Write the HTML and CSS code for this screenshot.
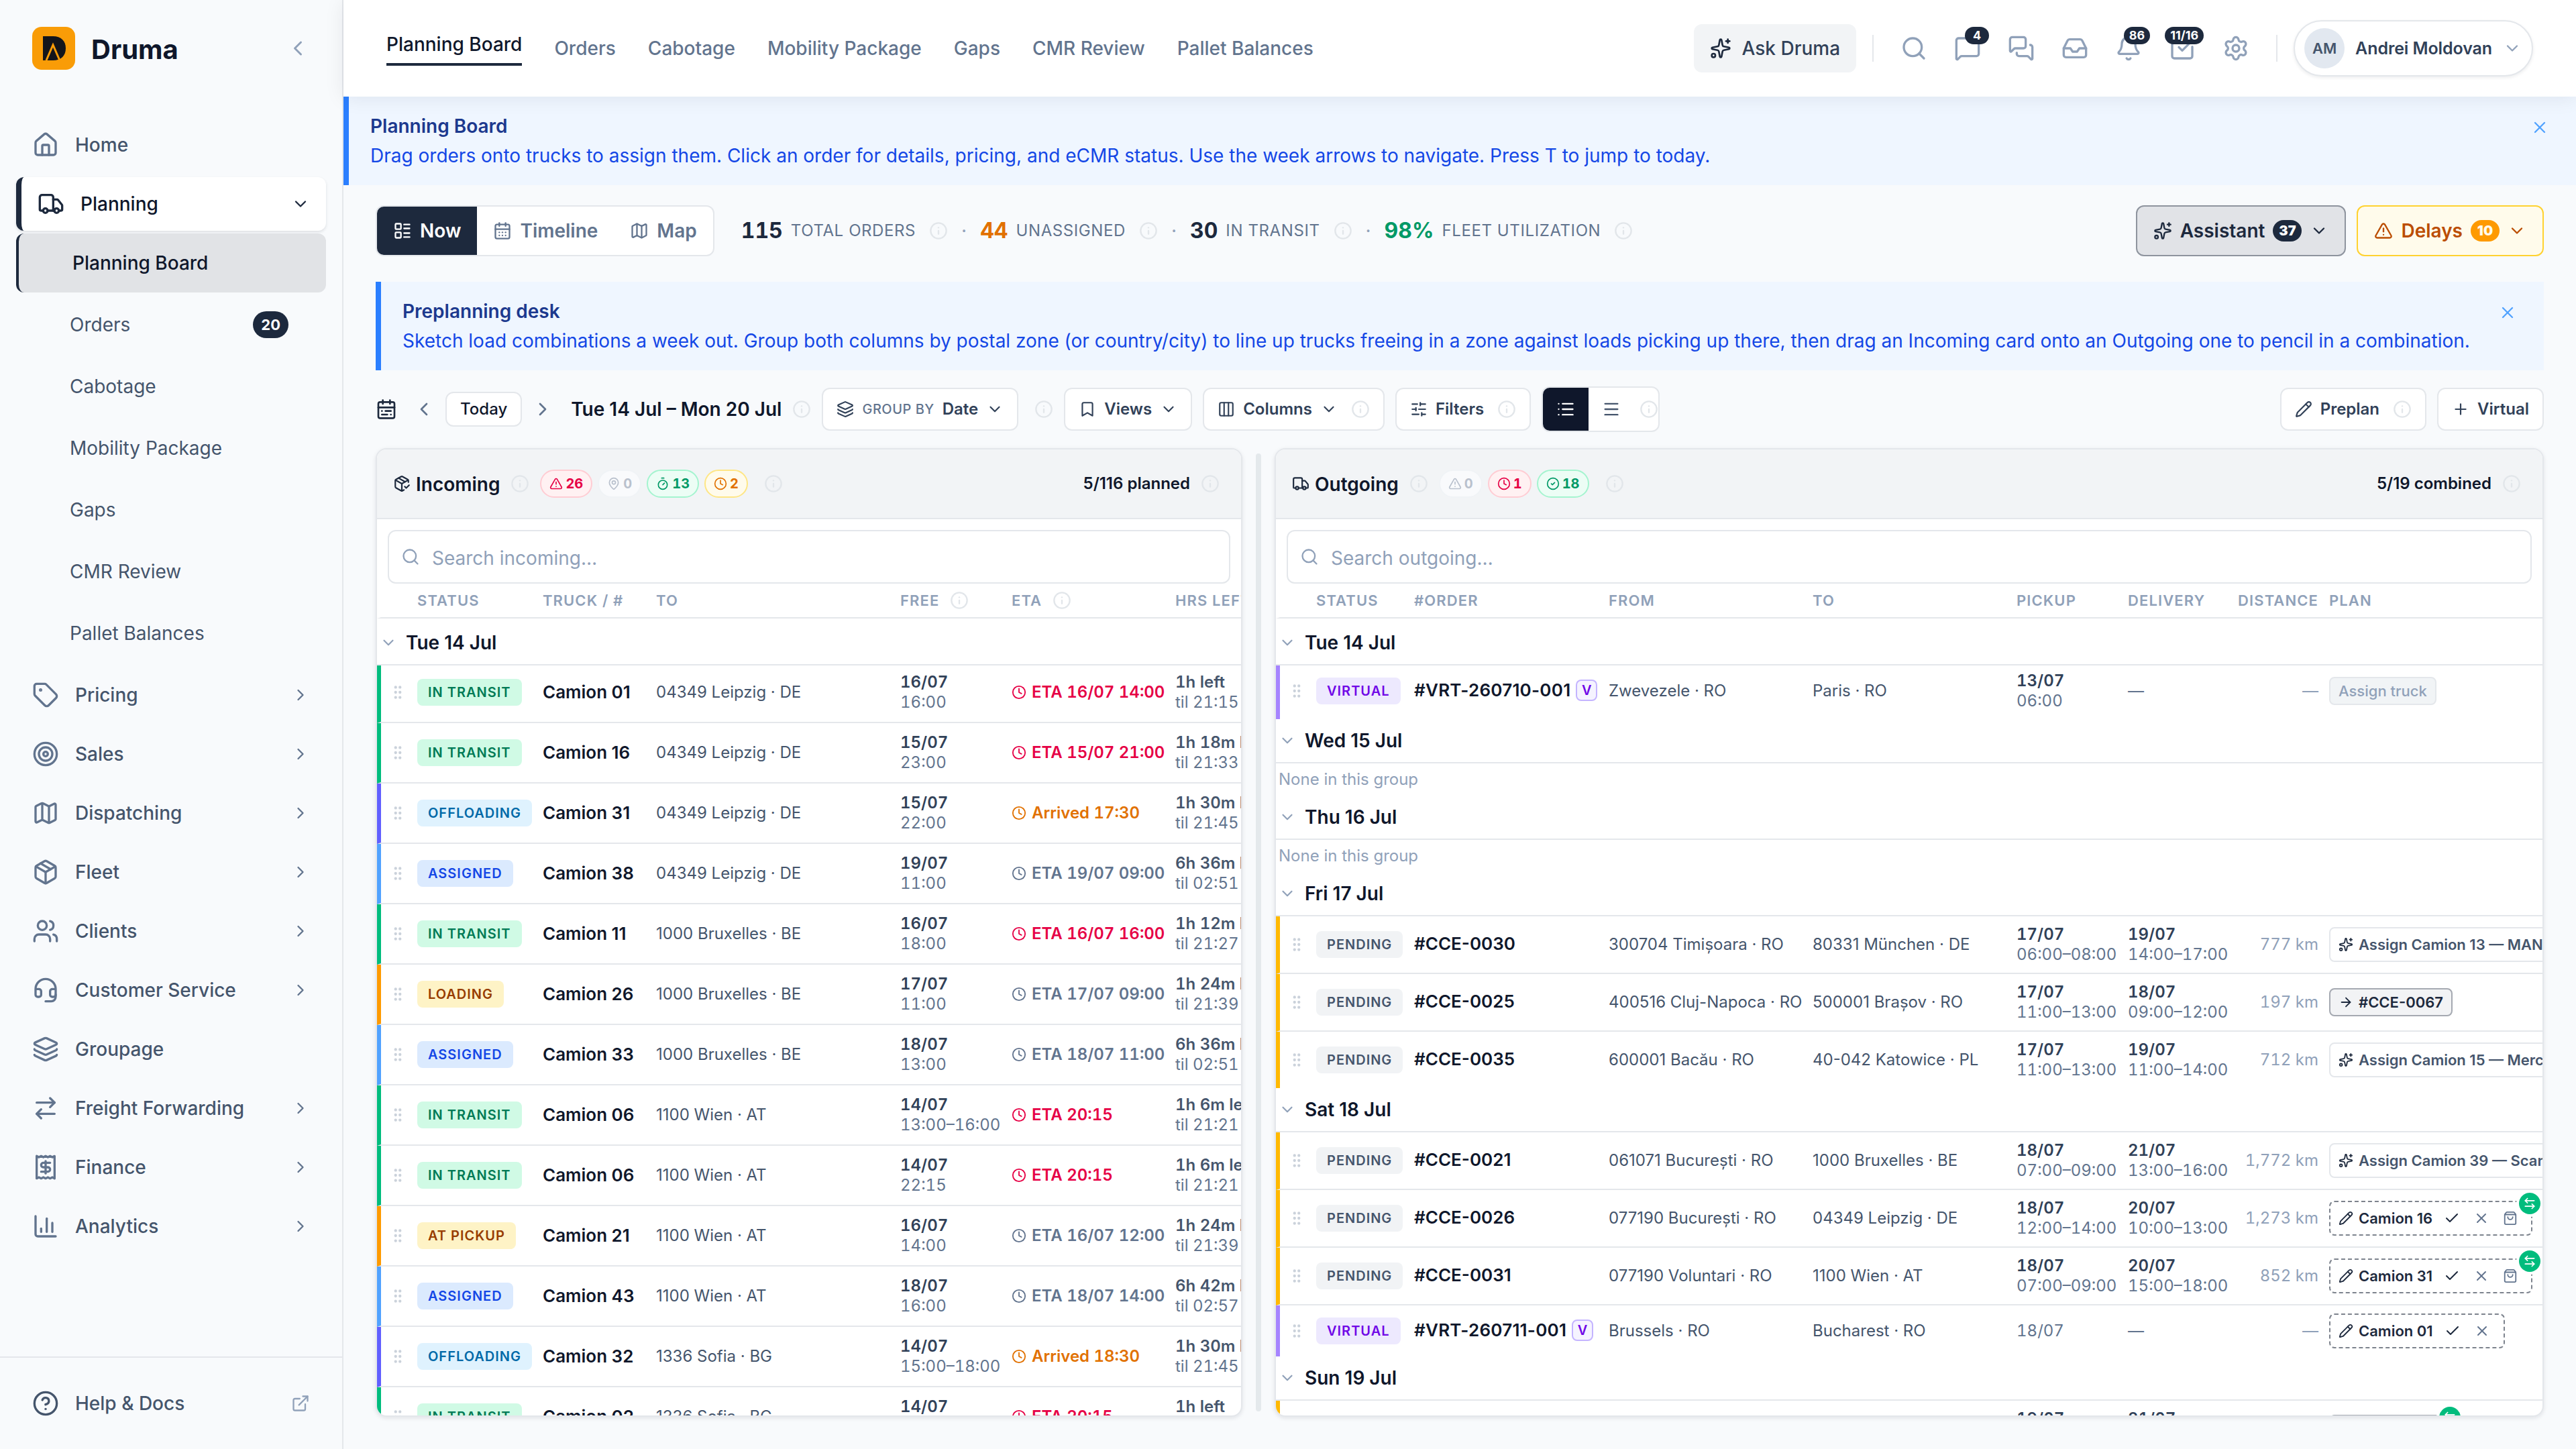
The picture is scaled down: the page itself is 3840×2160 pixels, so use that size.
FILE: index.html
```html
<!DOCTYPE html>
<html lang="en">
<head>
<meta charset="utf-8">
<title>Druma – Planning Board</title>
<link rel="stylesheet" href="styles.css">
</head>
<body>
<svg class="sprite" aria-hidden="true">
<symbol id="home" viewBox="0 0 24 24"><path d="M15 21v-8a1 1 0 0 0-1-1h-4a1 1 0 0 0-1 1v8"/><path d="M3 10a2 2 0 0 1 .709-1.528l7-6a2 2 0 0 1 2.582 0l7 6A2 2 0 0 1 21 10v9a2 2 0 0 1-2 2H5a2 2 0 0 1-2-2z"/></symbol>
<symbol id="truck" viewBox="0 0 24 24"><path d="M14 18V6a2 2 0 0 0-2-2H4a2 2 0 0 0-2 2v11a1 1 0 0 0 1 1h2"/><path d="M15 18H9"/><path d="M19 18h2a1 1 0 0 0 1-1v-3.65a1 1 0 0 0-.22-.624l-3.48-4.35A1 1 0 0 0 17.52 8H14"/><circle cx="17" cy="18" r="2"/><circle cx="7" cy="18" r="2"/></symbol>
<symbol id="tag" viewBox="0 0 24 24"><path d="M12.586 2.586A2 2 0 0 0 11.172 2H4a2 2 0 0 0-2 2v7.172a2 2 0 0 0 .586 1.414l8.704 8.704a2.426 2.426 0 0 0 3.42 0l6.58-6.58a2.426 2.426 0 0 0 0-3.42z"/><circle cx="7.5" cy="7.5" r=".5" fill="currentColor"/></symbol>
<symbol id="target" viewBox="0 0 24 24"><circle cx="12" cy="12" r="10"/><circle cx="12" cy="12" r="6"/><circle cx="12" cy="12" r="2"/></symbol>
<symbol id="map" viewBox="0 0 24 24"><path d="M14.106 5.553a2 2 0 0 0 1.788 0l3.659-1.83A1 1 0 0 1 21 4.619v12.764a1 1 0 0 1-.553.894l-4.553 2.277a2 2 0 0 1-1.788 0l-4.212-2.106a2 2 0 0 0-1.788 0l-3.659 1.83A1 1 0 0 1 3 19.381V6.618a1 1 0 0 1 .553-.894l4.553-2.277a2 2 0 0 1 1.788 0z"/><path d="M15 5.764v15"/><path d="M9 3.236v15"/></symbol>
<symbol id="package" viewBox="0 0 24 24"><path d="M11 21.73a2 2 0 0 0 2 0l7-4A2 2 0 0 0 21 16V8a2 2 0 0 0-1-1.73l-7-4a2 2 0 0 0-2 0l-7 4A2 2 0 0 0 3 8v8a2 2 0 0 0 1 1.73z"/><path d="M12 22V12"/><path d="M3.29 7 12 12l8.71-5"/><path d="m7.5 4.27 9 5.15"/></symbol>
<symbol id="package-check" viewBox="0 0 24 24"><path d="m16 16 2 2 4-4"/><path d="M21 10V8a2 2 0 0 0-1-1.73l-7-4a2 2 0 0 0-2 0l-7 4A2 2 0 0 0 3 8v8a2 2 0 0 0 1 1.73l7 4a2 2 0 0 0 2 0l2-1.14"/><path d="m7.5 4.27 9 5.15"/><path d="M3.29 7 12 12l8.71-5"/><path d="M12 22V12"/></symbol>
<symbol id="users" viewBox="0 0 24 24"><path d="M16 21v-2a4 4 0 0 0-4-4H6a4 4 0 0 0-4 4v2"/><circle cx="9" cy="7" r="4"/><path d="M22 21v-2a4 4 0 0 0-3-3.87"/><path d="M16 3.13a4 4 0 0 1 0 7.75"/></symbol>
<symbol id="headset" viewBox="0 0 24 24"><path d="M3 11h3a2 2 0 0 1 2 2v3a2 2 0 0 1-2 2H5a2 2 0 0 1-2-2v-5Zm0 0a9 9 0 1 1 18 0m0 0v5a2 2 0 0 1-2 2h-1a2 2 0 0 1-2-2v-3a2 2 0 0 1 2-2h3Z"/><path d="M21 16v2a4 4 0 0 1-4 4h-5"/></symbol>
<symbol id="layers" viewBox="0 0 24 24"><path d="M12.83 2.18a2 2 0 0 0-1.66 0L2.6 6.08a1 1 0 0 0 0 1.83l8.58 3.91a2 2 0 0 0 1.66 0l8.58-3.9a1 1 0 0 0 0-1.83z"/><path d="M2 12a1 1 0 0 0 .58.91l8.6 3.91a2 2 0 0 0 1.65 0l8.58-3.9A1 1 0 0 0 22 12"/><path d="M2 17a1 1 0 0 0 .58.91l8.6 3.91a2 2 0 0 0 1.65 0l8.58-3.9A1 1 0 0 0 22 17"/></symbol>
<symbol id="swap" viewBox="0 0 24 24"><path d="m16 3 4 4-4 4"/><path d="M20 7H4"/><path d="m8 21-4-4 4-4"/><path d="M4 17h16"/></symbol>
<symbol id="swap-back" viewBox="0 0 24 24"><path d="M8 3 4 7l4 4"/><path d="M4 7h16"/><path d="m16 21 4-4-4-4"/><path d="M20 17H4"/></symbol>
<symbol id="receipt" viewBox="0 0 24 24"><path d="M4 2v20l2-1 2 1 2-1 2 1 2-1 2 1 2-1 2 1V2l-2 1-2-1-2 1-2-1-2 1-2-1-2 1Z"/><path d="M16 8h-6a2 2 0 1 0 0 4h4a2 2 0 1 1 0 4H8"/><path d="M12 17.5v-11"/></symbol>
<symbol id="chart" viewBox="0 0 24 24"><path d="M3 3v16a2 2 0 0 0 2 2h16"/><path d="M18 17V9"/><path d="M13 17V5"/><path d="M8 17v-3"/></symbol>
<symbol id="help" viewBox="0 0 24 24"><circle cx="12" cy="12" r="10"/><path d="M9.09 9a3 3 0 0 1 5.83 1c0 2-3 3-3 3"/><path d="M12 17h.01"/></symbol>
<symbol id="external" viewBox="0 0 24 24"><path d="M15 3h6v6"/><path d="M10 14 21 3"/><path d="M18 13v6a2 2 0 0 1-2 2H5a2 2 0 0 1-2-2V8a2 2 0 0 1 2-2h6"/></symbol>
<symbol id="right" viewBox="0 0 24 24"><path d="m9 18 6-6-6-6"/></symbol>
<symbol id="left" viewBox="0 0 24 24"><path d="m15 18-6-6 6-6"/></symbol>
<symbol id="down" viewBox="0 0 24 24"><path d="m6 9 6 6 6-6"/></symbol>
<symbol id="sparkles" viewBox="0 0 24 24"><path d="M11.017 2.814a1 1 0 0 1 1.966 0l1.051 5.558a2 2 0 0 0 1.594 1.594l5.558 1.051a1 1 0 0 1 0 1.966l-5.558 1.051a2 2 0 0 0-1.594 1.594l-1.051 5.558a1 1 0 0 1-1.966 0l-1.051-5.558a2 2 0 0 0-1.594-1.594l-5.558-1.051a1 1 0 0 1 0-1.966l5.558-1.051a2 2 0 0 0 1.594-1.594z"/><path d="M20 2v4"/><path d="M22 4h-4"/><circle cx="4" cy="20" r="2"/></symbol>
<symbol id="search" viewBox="0 0 24 24"><path d="m21 21-4.34-4.34"/><circle cx="11" cy="11" r="8"/></symbol>
<symbol id="message" viewBox="0 0 24 24"><path d="M22 17a2 2 0 0 1-2 2H6.828a2 2 0 0 0-1.414.586l-2.202 2.202A.71.71 0 0 1 2 21.286V5a2 2 0 0 1 2-2h16a2 2 0 0 1 2 2z"/></symbol>
<symbol id="messages" viewBox="0 0 24 24"><path d="M16 10a2 2 0 0 1-2 2H6.828a2 2 0 0 0-1.414.586l-2.202 2.202A.71.71 0 0 1 2 14.286V4a2 2 0 0 1 2-2h10a2 2 0 0 1 2 2z"/><path d="M20 9a2 2 0 0 1 2 2v10.286a.71.71 0 0 1-1.212.502l-2.202-2.202A2 2 0 0 0 17.172 19H10a2 2 0 0 1-2-2v-1"/></symbol>
<symbol id="inbox" viewBox="0 0 24 24"><path d="M22 12h-6l-2 3h-4l-2-3H2"/><path d="M5.45 5.11 2 12v6a2 2 0 0 0 2 2h16a2 2 0 0 0 2-2v-6l-3.45-6.89A2 2 0 0 0 16.76 4H7.24a2 2 0 0 0-1.79 1.11z"/></symbol>
<symbol id="bell" viewBox="0 0 24 24"><path d="M10.268 21a2 2 0 0 0 3.464 0"/><path d="M3.262 15.326A1 1 0 0 0 4 17h16a1 1 0 0 0 .74-1.673C19.41 13.956 18 12.499 18 8A6 6 0 0 0 6 8c0 4.499-1.411 5.956-2.738 7.326"/></symbol>
<symbol id="tasks" viewBox="0 0 24 24"><path d="M21 10.656V19a2 2 0 0 1-2 2H5a2 2 0 0 1-2-2V5a2 2 0 0 1 2-2h12.344"/><path d="m9 11 3 3L22 4"/></symbol>
<symbol id="gear" viewBox="0 0 24 24"><path d="M9.671 4.136a2.34 2.34 0 0 1 4.659 0 2.34 2.34 0 0 0 3.319 1.915 2.34 2.34 0 0 1 2.33 4.033 2.34 2.34 0 0 0 0 3.831 2.34 2.34 0 0 1-2.33 4.033 2.34 2.34 0 0 0-3.319 1.915 2.34 2.34 0 0 1-4.659 0 2.34 2.34 0 0 0-3.32-1.915 2.34 2.34 0 0 1-2.33-4.033 2.34 2.34 0 0 0 0-3.831A2.34 2.34 0 0 1 6.35 6.051a2.34 2.34 0 0 0 3.319-1.915"/><circle cx="12" cy="12" r="3"/></symbol>
<symbol id="x" viewBox="0 0 24 24"><path d="M18 6 6 18"/><path d="m6 6 12 12"/></symbol>
<symbol id="list-cards" viewBox="0 0 24 24"><rect width="7" height="7" x="3" y="3" rx="1"/><rect width="7" height="7" x="3" y="14" rx="1"/><path d="M14 4h7"/><path d="M14 9h7"/><path d="M14 15h7"/><path d="M14 20h7"/></symbol>
<symbol id="calendar" viewBox="0 0 24 24"><path d="M8 2v4"/><path d="M16 2v4"/><rect width="18" height="18" x="3" y="4" rx="2"/><path d="M3 10h18"/><path d="M8 14h.01"/><path d="M12 14h.01"/><path d="M16 14h.01"/><path d="M8 18h.01"/><path d="M12 18h.01"/><path d="M16 18h.01"/></symbol>
<symbol id="calendar-range" viewBox="0 0 24 24"><rect width="18" height="18" x="3" y="4" rx="2"/><path d="M16 2v4"/><path d="M3 10h18"/><path d="M8 2v4"/><path d="M17 14h-6"/><path d="M13 18H7"/><path d="M7 14h.01"/><path d="M17 18h.01"/></symbol>
<symbol id="info" viewBox="0 0 24 24"><circle cx="12" cy="12" r="10"/><path d="M12 16v-4"/><path d="M12 8h.01"/></symbol>
<symbol id="alert" viewBox="0 0 24 24"><path d="m21.73 18-8-14a2 2 0 0 0-3.48 0l-8 14A2 2 0 0 0 4 21h16a2 2 0 0 0 1.73-3"/><path d="M12 9v4"/><path d="M12 17h.01"/></symbol>
<symbol id="pin" viewBox="0 0 24 24"><path d="M20 10c0 4.993-5.539 10.193-7.399 11.799a1 1 0 0 1-1.202 0C9.539 20.193 4 14.993 4 10a8 8 0 0 1 16 0"/><circle cx="12" cy="10" r="3"/></symbol>
<symbol id="timer" viewBox="0 0 24 24"><path d="M10 2h4"/><path d="m12 14 3-3"/><circle cx="12" cy="14" r="8"/></symbol>
<symbol id="clock" viewBox="0 0 24 24"><circle cx="12" cy="12" r="10"/><path d="M12 6v6l4 2"/></symbol>
<symbol id="check-circle" viewBox="0 0 24 24"><circle cx="12" cy="12" r="10"/><path d="m9 12 2 2 4-4"/></symbol>
<symbol id="bookmark" viewBox="0 0 24 24"><path d="m19 21-7-4-7 4V5a2 2 0 0 1 2-2h10a2 2 0 0 1 2 2v16z"/></symbol>
<symbol id="columns" viewBox="0 0 24 24"><rect width="18" height="18" x="3" y="3" rx="2"/><path d="M9 3v18"/><path d="M15 3v18"/></symbol>
<symbol id="sliders" viewBox="0 0 24 24"><path d="M10 5H3"/><path d="M12 19H3"/><path d="M14 3v4"/><path d="M16 17v4"/><path d="M21 12h-9"/><path d="M21 19h-5"/><path d="M21 5h-7"/><path d="M8 10v4"/><path d="M8 12H3"/></symbol>
<symbol id="list" viewBox="0 0 24 24"><path d="M3 5h.01"/><path d="M3 12h.01"/><path d="M3 19h.01"/><path d="M8 5h13"/><path d="M8 12h13"/><path d="M8 19h13"/></symbol>
<symbol id="menu" viewBox="0 0 24 24"><path d="M4 5h16"/><path d="M4 12h16"/><path d="M4 19h16"/></symbol>
<symbol id="pencil" viewBox="0 0 24 24"><path d="M21.174 6.812a1 1 0 0 0-3.986-3.987L3.842 16.174a2 2 0 0 0-.5.83l-1.321 4.352a.5.5 0 0 0 .623.622l4.353-1.32a2 2 0 0 0 .83-.497z"/><path d="m15 5 4 4"/></symbol>
<symbol id="plus" viewBox="0 0 24 24"><path d="M5 12h14"/><path d="M12 5v14"/></symbol>
<symbol id="grip" viewBox="0 0 24 24"><circle cx="9" cy="12" r="1"/><circle cx="9" cy="5" r="1"/><circle cx="9" cy="19" r="1"/><circle cx="15" cy="12" r="1"/><circle cx="15" cy="5" r="1"/><circle cx="15" cy="19" r="1"/></symbol>
<symbol id="arrow" viewBox="0 0 24 24"><path d="M5 12h14"/><path d="m12 5 7 7-7 7"/></symbol>
<symbol id="check" viewBox="0 0 24 24"><path d="M20 6 9 17l-5-5"/></symbol>
<symbol id="bag" viewBox="0 0 24 24"><path d="M16 10a4 4 0 0 1-8 0"/><path d="M3.103 6.034h17.794"/><path d="M3.4 5.467a2 2 0 0 0-.4 1.2V20a2 2 0 0 0 2 2h14a2 2 0 0 0 2-2V6.667a2 2 0 0 0-.4-1.2l-2-2.667A2 2 0 0 0 17 2H7a2 2 0 0 0-1.6.8z"/></symbol>
</svg>
<div class="app">
<aside class="sidebar">
  <div class="brand">
    <svg class="logo" viewBox="0 0 64 64"><rect width="64" height="64" rx="14" fill="#f99c07"/><path d="M16 14h15c12 0 19 7 19 18s-7 18-19 18H16z" fill="#13151b"/><path d="M21 50l10-23 10 23" fill="none" stroke="#f99c07" stroke-width="3"/></svg>
    <span class="brand-name">Druma</span>
    <svg class="i i36 muted"><use href="#left"/></svg>
  </div>
  <nav class="side-nav">
    <a class="item"><svg class="i i40"><use href="#home"/></svg><span>Home</span></a>
    <a class="item open"><svg class="i i40"><use href="#truck"/></svg><span>Planning</span><svg class="i i28"><use href="#down"/></svg></a>
    <div class="sub">
      <a class="sub-item active">Planning Board</a>
      <a class="sub-item">Orders<b class="count">20</b></a>
      <a class="sub-item">Cabotage</a>
      <a class="sub-item">Mobility Package</a>
      <a class="sub-item">Gaps</a>
      <a class="sub-item">CMR Review</a>
      <a class="sub-item">Pallet Balances</a>
    </div>
    <a class="item"><svg class="i i40"><use href="#tag"/></svg><span>Pricing</span><svg class="i i28"><use href="#right"/></svg></a>
    <a class="item"><svg class="i i40"><use href="#target"/></svg><span>Sales</span><svg class="i i28"><use href="#right"/></svg></a>
    <a class="item"><svg class="i i40"><use href="#map"/></svg><span>Dispatching</span><svg class="i i28"><use href="#right"/></svg></a>
    <a class="item"><svg class="i i40"><use href="#package"/></svg><span>Fleet</span><svg class="i i28"><use href="#right"/></svg></a>
    <a class="item"><svg class="i i40"><use href="#users"/></svg><span>Clients</span><svg class="i i28"><use href="#right"/></svg></a>
    <a class="item"><svg class="i i40"><use href="#headset"/></svg><span>Customer Service</span><svg class="i i28"><use href="#right"/></svg></a>
    <a class="item"><svg class="i i40"><use href="#layers"/></svg><span>Groupage</span></a>
    <a class="item"><svg class="i i40"><use href="#swap"/></svg><span>Freight Forwarding</span><svg class="i i28"><use href="#right"/></svg></a>
    <a class="item"><svg class="i i40"><use href="#receipt"/></svg><span>Finance</span><svg class="i i28"><use href="#right"/></svg></a>
    <a class="item"><svg class="i i40"><use href="#chart"/></svg><span>Analytics</span><svg class="i i28"><use href="#right"/></svg></a>
  </nav>
  <div class="side-foot"><a class="item help"><svg class="i i40"><use href="#help"/></svg><span>Help &amp; Docs</span><svg class="i i28 muted"><use href="#external"/></svg></a></div>
</aside>

<div class="main">
<header class="topbar">
  <nav class="tabs"><a class="on">Planning Board</a><a>Orders</a><a>Cabotage</a><a>Mobility Package</a><a>Gaps</a><a>CMR Review</a><a>Pallet Balances</a></nav>
  <button class="ask"><svg class="i i32"><use href="#sparkles"/></svg>Ask Druma</button>
  <span class="vline"></span>
  <div class="tools">
    <span class="tool"><svg class="i i40"><use href="#search"/></svg></span>
    <span class="tool"><svg class="i i40"><use href="#message"/></svg><b>4</b></span>
    <span class="tool"><svg class="i i40"><use href="#messages"/></svg></span>
    <span class="tool"><svg class="i i40"><use href="#inbox"/></svg></span>
    <span class="tool"><svg class="i i40"><use href="#bell"/></svg><b>86</b></span>
    <span class="tool"><svg class="i i40"><use href="#tasks"/></svg><b>11/16</b></span>
    <span class="tool"><svg class="i i40"><use href="#gear"/></svg></span>
  </div>
  <span class="vline"></span>
  <div class="user"><span class="avatar">AM</span><span class="user-name">Andrei Moldovan</span><svg class="i i28 muted"><use href="#down"/></svg></div>
</header>

<section class="banner">
  <div><h2>Planning Board</h2><p>Drag orders onto trucks to assign them. Click an order for details, pricing, and eCMR status. Use the week arrows to navigate. Press T to jump to today.</p></div>
  <svg class="i i28"><use href="#x"/></svg>
</section>

<div class="content">
<div class="summary">
  <div class="segment"><a class="on"><svg class="i i28"><use href="#list-cards"/></svg>Now</a><a><svg class="i i28"><use href="#calendar"/></svg>Timeline</a><a><svg class="i i28"><use href="#map"/></svg>Map</a></div>
  <div class="stats">
    <span class="stat"><b>115</b><span>Total orders</span><svg class="i info"><use href="#info"/></svg></span><i>·</i>
    <span class="stat orange"><b>44</b><span>Unassigned</span><svg class="i info"><use href="#info"/></svg></span><i>·</i>
    <span class="stat"><b>30</b><span>In transit</span><svg class="i info"><use href="#info"/></svg></span><i>·</i>
    <span class="stat green"><b>98%</b><span>Fleet utilization</span><svg class="i info"><use href="#info"/></svg></span>
  </div>
  <button class="action assistant"><svg class="i i28"><use href="#sparkles"/></svg>Assistant<b>37</b><svg class="i i28"><use href="#down"/></svg></button>
  <button class="action delays"><svg class="i i28"><use href="#alert"/></svg>Delays<b>10</b><svg class="i i28"><use href="#down"/></svg></button>
</div>

<section class="banner inner">
  <div><h2>Preplanning desk</h2><p>Sketch load combinations a week out. Group both columns by postal zone (or country/city) to line up trucks freeing in a zone against loads picking up there, then drag an Incoming card onto an Outgoing one to pencil in a combination.</p></div>
  <svg class="i i28"><use href="#x"/></svg>
</section>

<div class="toolbar">
  <svg class="i i32 ink"><use href="#calendar-range"/></svg>
  <svg class="i i32 step"><use href="#left"/></svg>
  <button class="btn today">Today</button>
  <svg class="i i32 step"><use href="#right"/></svg>
  <strong class="range">Tue 14 Jul – Mon 20 Jul</strong>
  <svg class="i info"><use href="#info"/></svg>
  <button class="btn"><svg class="i i26"><use href="#layers"/></svg><small>Group by</small>Date<svg class="i i26"><use href="#down"/></svg></button>
  <svg class="i info lone"><use href="#info"/></svg>
  <button class="btn"><svg class="i i26"><use href="#bookmark"/></svg>Views<svg class="i i26"><use href="#down"/></svg></button>
  <button class="btn gap"><svg class="i i26"><use href="#columns"/></svg>Columns<svg class="i i26"><use href="#down"/></svg><svg class="i info"><use href="#info"/></svg></button>
  <button class="btn gap"><svg class="i i26"><use href="#sliders"/></svg>Filters<svg class="i info"><use href="#info"/></svg></button>
  <div class="density"><span class="on"><svg class="i i28"><use href="#list"/></svg></span><span><svg class="i i28"><use href="#menu"/></svg></span><svg class="i info"><use href="#info"/></svg></div>
  <button class="btn push"><svg class="i i26"><use href="#pencil"/></svg>Preplan<svg class="i info"><use href="#info"/></svg></button>
  <button class="btn gap"><svg class="i i26"><use href="#plus"/></svg>Virtual</button>
</div>

<div class="boards">
<section class="panel incoming">
  <header class="panel-head">
    <svg class="i i26"><use href="#package-check"/></svg><h3>Incoming</h3><svg class="i info"><use href="#info"/></svg>
    <div class="pills"><span class="pill rose"><svg class="i i20"><use href="#alert"/></svg>26</span><span class="pill off"><svg class="i i20"><use href="#pin"/></svg>0</span><span class="pill mint"><svg class="i i20"><use href="#timer"/></svg>13</span><span class="pill amber"><svg class="i i20"><use href="#clock"/></svg>2</span></div>
    <svg class="i info lone"><use href="#info"/></svg>
    <span class="tally">5/116 planned</span><svg class="i info"><use href="#info"/></svg>
  </header>
  <label class="search"><svg class="i i28"><use href="#search"/></svg><span>Search incoming…</span></label>
  <div class="grid cols"><span></span><span>Status</span><span>Truck / #</span><span>To</span><span>Free <svg class="i info"><use href="#info"/></svg></span><span>ETA <svg class="i info"><use href="#info"/></svg></span><span>Hrs left</span></div>
  <div class="rows">
    <div class="group first"><svg class="i i26"><use href="#down"/></svg>Tue 14 Jul</div>
    <div class="grid row c-green"><svg class="i i26 grip"><use href="#grip"/></svg><em class="tag transit">In transit</em><b>Camion 01</b><span>04349 Leipzig · DE</span><span class="two"><b>16/07</b>16:00</span><span class="eta late"><svg class="i i22"><use href="#clock"/></svg>ETA 16/07 14:00</span><span class="two hrs"><b>1h left</b>til 21:15</span></div>
    <div class="grid row c-green"><svg class="i i26 grip"><use href="#grip"/></svg><em class="tag transit">In transit</em><b>Camion 16</b><span>04349 Leipzig · DE</span><span class="two"><b>15/07</b>23:00</span><span class="eta late"><svg class="i i22"><use href="#clock"/></svg>ETA 15/07 21:00</span><span class="two hrs"><b>1h 18m left</b>til 21:33</span></div>
    <div class="grid row c-indigo"><svg class="i i26 grip"><use href="#grip"/></svg><em class="tag offload">Offloading</em><b>Camion 31</b><span>04349 Leipzig · DE</span><span class="two"><b>15/07</b>22:00</span><span class="eta arrived"><svg class="i i22"><use href="#clock"/></svg>Arrived 17:30</span><span class="two hrs"><b>1h 30m left</b>til 21:45</span></div>
    <div class="grid row c-blue"><svg class="i i26 grip"><use href="#grip"/></svg><em class="tag assigned">Assigned</em><b>Camion 38</b><span>04349 Leipzig · DE</span><span class="two"><b>19/07</b>11:00</span><span class="eta"><svg class="i i22"><use href="#clock"/></svg>ETA 19/07 09:00</span><span class="two hrs"><b>6h 36m left</b>til 02:51</span></div>
    <div class="grid row c-green"><svg class="i i26 grip"><use href="#grip"/></svg><em class="tag transit">In transit</em><b>Camion 11</b><span>1000 Bruxelles · BE</span><span class="two"><b>16/07</b>18:00</span><span class="eta late"><svg class="i i22"><use href="#clock"/></svg>ETA 16/07 16:00</span><span class="two hrs"><b>1h 12m left</b>til 21:27</span></div>
    <div class="grid row c-orange"><svg class="i i26 grip"><use href="#grip"/></svg><em class="tag loading">Loading</em><b>Camion 26</b><span>1000 Bruxelles · BE</span><span class="two"><b>17/07</b>11:00</span><span class="eta"><svg class="i i22"><use href="#clock"/></svg>ETA 17/07 09:00</span><span class="two hrs"><b>1h 24m left</b>til 21:39</span></div>
    <div class="grid row c-blue"><svg class="i i26 grip"><use href="#grip"/></svg><em class="tag assigned">Assigned</em><b>Camion 33</b><span>1000 Bruxelles · BE</span><span class="two"><b>18/07</b>13:00</span><span class="eta"><svg class="i i22"><use href="#clock"/></svg>ETA 18/07 11:00</span><span class="two hrs"><b>6h 36m left</b>til 02:51</span></div>
    <div class="grid row c-green"><svg class="i i26 grip"><use href="#grip"/></svg><em class="tag transit">In transit</em><b>Camion 06</b><span>1100 Wien · AT</span><span class="two"><b>14/07</b>13:00–16:00</span><span class="eta late"><svg class="i i22"><use href="#clock"/></svg>ETA 20:15</span><span class="two hrs"><b>1h 6m left</b>til 21:21</span></div>
    <div class="grid row c-green"><svg class="i i26 grip"><use href="#grip"/></svg><em class="tag transit">In transit</em><b>Camion 06</b><span>1100 Wien · AT</span><span class="two"><b>14/07</b>22:15</span><span class="eta late"><svg class="i i22"><use href="#clock"/></svg>ETA 20:15</span><span class="two hrs"><b>1h 6m left</b>til 21:21</span></div>
    <div class="grid row c-orange"><svg class="i i26 grip"><use href="#grip"/></svg><em class="tag loading">At pickup</em><b>Camion 21</b><span>1100 Wien · AT</span><span class="two"><b>16/07</b>14:00</span><span class="eta"><svg class="i i22"><use href="#clock"/></svg>ETA 16/07 12:00</span><span class="two hrs"><b>1h 24m left</b>til 21:39</span></div>
    <div class="grid row c-blue"><svg class="i i26 grip"><use href="#grip"/></svg><em class="tag assigned">Assigned</em><b>Camion 43</b><span>1100 Wien · AT</span><span class="two"><b>18/07</b>16:00</span><span class="eta"><svg class="i i22"><use href="#clock"/></svg>ETA 18/07 14:00</span><span class="two hrs"><b>6h 42m left</b>til 02:57</span></div>
    <div class="grid row c-indigo"><svg class="i i26 grip"><use href="#grip"/></svg><em class="tag offload">Offloading</em><b>Camion 32</b><span>1336 Sofia · BG</span><span class="two"><b>14/07</b>15:00–18:00</span><span class="eta arrived"><svg class="i i22"><use href="#clock"/></svg>Arrived 18:30</span><span class="two hrs"><b>1h 30m left</b>til 21:45</span></div>
    <div class="grid row c-green"><svg class="i i26 grip"><use href="#grip"/></svg><em class="tag transit">In transit</em><b>Camion 02</b><span>1336 Sofia · BG</span><span class="two"><b>14/07</b>22:15</span><span class="eta late"><svg class="i i22"><use href="#clock"/></svg>ETA 20:15</span><span class="two hrs"><b>1h left</b>til 21:15</span></div>
  </div>
</section>
<span class="resizer"></span>
<section class="panel outgoing">
  <header class="panel-head">
    <svg class="i i26"><use href="#truck"/></svg><h3>Outgoing</h3><svg class="i info"><use href="#info"/></svg>
    <div class="pills"><span class="pill off"><svg class="i i20"><use href="#alert"/></svg>0</span><span class="pill rose"><svg class="i i20"><use href="#clock"/></svg>1</span><span class="pill mint"><svg class="i i20"><use href="#check-circle"/></svg>18</span></div>
    <svg class="i info lone"><use href="#info"/></svg>
    <span class="tally">5/19 combined</span><svg class="i info"><use href="#info"/></svg>
  </header>
  <label class="search"><svg class="i i28"><use href="#search"/></svg><span>Search outgoing…</span></label>
  <div class="grid cols"><span></span><span>Status</span><span>#Order</span><span>From</span><span>To</span><span>Pickup</span><span>Delivery</span><span class="num">Distance</span><span>Plan</span></div>
  <div class="rows">
    <div class="group first"><svg class="i i26"><use href="#down"/></svg>Tue 14 Jul</div>
    <div class="grid row last c-violet"><svg class="i i26 grip"><use href="#grip"/></svg><em class="tag virtual">Virtual</em><b class="long">#VRT-260710-001<i class="v">V</i></b><span>Zwevezele · RO</span><span>Paris · RO</span><span class="two"><b>13/07</b>06:00</span><span class="dim">—</span><span class="num">—</span><span class="chip ghost">Assign truck</span></div>
    <div class="group"><svg class="i i26"><use href="#down"/></svg>Wed 15 Jul</div>
    <div class="none">None in this group</div>
    <div class="group"><svg class="i i26"><use href="#down"/></svg>Thu 16 Jul</div>
    <div class="none">None in this group</div>
    <div class="group"><svg class="i i26"><use href="#down"/></svg>Fri 17 Jul</div>
    <div class="grid row c-yellow"><svg class="i i26 grip"><use href="#grip"/></svg><em class="tag pending">Pending</em><b>#CCE-0030</b><span>300704 Timișoara · RO</span><span>80331 München · DE</span><span class="two"><b>17/07</b>06:00–08:00</span><span class="two"><b>19/07</b>14:00–17:00</span><span class="num">777 km</span><span class="chip tall"><svg class="i i22"><use href="#sparkles"/></svg>Assign Camion 13 — MAN TGX</span></div>
    <div class="grid row c-yellow"><svg class="i i26 grip"><use href="#grip"/></svg><em class="tag pending">Pending</em><b>#CCE-0025</b><span>400516 Cluj-Napoca · RO</span><span>500001 Brașov · RO</span><span class="two"><b>17/07</b>11:00–13:00</span><span class="two"><b>18/07</b>09:00–12:00</span><span class="num">197 km</span><span class="chip linked"><svg class="i i22"><use href="#arrow"/></svg>#CCE-0067</span></div>
    <div class="grid row last c-yellow"><svg class="i i26 grip"><use href="#grip"/></svg><em class="tag pending">Pending</em><b>#CCE-0035</b><span>600001 Bacău · RO</span><span>40-042 Katowice · PL</span><span class="two"><b>17/07</b>11:00–13:00</span><span class="two"><b>19/07</b>11:00–14:00</span><span class="num">712 km</span><span class="chip tall"><svg class="i i22"><use href="#sparkles"/></svg>Assign Camion 15 — Mercedes</span></div>
    <div class="group"><svg class="i i26"><use href="#down"/></svg>Sat 18 Jul</div>
    <div class="grid row c-yellow"><svg class="i i26 grip"><use href="#grip"/></svg><em class="tag pending">Pending</em><b>#CCE-0021</b><span>061071 București · RO</span><span>1000 Bruxelles · BE</span><span class="two"><b>18/07</b>07:00–09:00</span><span class="two"><b>21/07</b>13:00–16:00</span><span class="num">1,772 km</span><span class="chip tall"><svg class="i i22"><use href="#sparkles"/></svg>Assign Camion 39 — Scania</span></div>
    <div class="grid row c-yellow"><svg class="i i26 grip"><use href="#grip"/></svg><em class="tag pending">Pending</em><b>#CCE-0026</b><span>077190 București · RO</span><span>04349 Leipzig · DE</span><span class="two"><b>18/07</b>12:00–14:00</span><span class="two"><b>20/07</b>10:00–13:00</span><span class="num">1,273 km</span><span class="chip tall draft"><svg class="i i22"><use href="#pencil"/></svg>Camion 16<span class="ops"><svg class="i i24"><use href="#check"/></svg><svg class="i i24"><use href="#x"/></svg><svg class="i i22"><use href="#bag"/></svg></span><span class="swap"><svg class="i i20"><use href="#swap-back"/></svg></span></span></div>
    <div class="grid row c-yellow"><svg class="i i26 grip"><use href="#grip"/></svg><em class="tag pending">Pending</em><b>#CCE-0031</b><span>077190 Voluntari · RO</span><span>1100 Wien · AT</span><span class="two"><b>18/07</b>07:00–09:00</span><span class="two"><b>20/07</b>15:00–18:00</span><span class="num">852 km</span><span class="chip tall draft"><svg class="i i22"><use href="#pencil"/></svg>Camion 31<span class="ops"><svg class="i i24"><use href="#check"/></svg><svg class="i i24"><use href="#x"/></svg><svg class="i i22"><use href="#bag"/></svg></span><span class="swap"><svg class="i i20"><use href="#swap-back"/></svg></span></span></div>
    <div class="grid row last short c-violet"><svg class="i i26 grip"><use href="#grip"/></svg><em class="tag virtual">Virtual</em><b class="long">#VRT-260711-001<i class="v">V</i></b><span>Brussels · RO</span><span>Bucharest · RO</span><span class="dim">18/07</span><span class="dim">—</span><span class="num">—</span><span class="chip tall draft"><svg class="i i22"><use href="#pencil"/></svg>Camion 01<span class="ops"><svg class="i i24"><use href="#check"/></svg><svg class="i i24"><use href="#x"/></svg></span></span></div>
    <div class="group"><svg class="i i26"><use href="#down"/></svg>Sun 19 Jul</div>
    <div class="grid row c-yellow"><svg class="i i26 grip"><use href="#grip"/></svg><em class="tag pending">Pending</em><b>#CCE-0040</b><span>077190 București · RO</span><span>1100 Wien · AT</span><span class="two"><b>19/07</b>07:00–09:00</span><span class="two"><b>21/07</b>13:00–16:00</span><span class="num">852 km</span><span class="chip linked"><svg class="i i22"><use href="#arrow"/></svg>#CCE-0067<span class="swap"><svg class="i i20"><use href="#swap-back"/></svg></span></span></div>
  </div>
</section>
</div>
</div>
</div>
</div>
</body>
</html>
```
FILE: styles.css
```css
:root {
  --line: #e4e7eb;
  --ink: #0f172b;
  --navy: #1d293d;
  --slate: #45556c;
  --mid: #62748e;
  --soft: #90a1b9;
}
* { box-sizing: border-box; margin: 0; padding: 0; }
body {
  width: 3840px;
  height: 2160px;
  overflow: hidden;
  background: #f8fafc;
  color: var(--ink);
  font: 400 28px/40px Inter, "Liberation Sans", sans-serif;
  white-space: nowrap;
}
button { font: inherit; color: inherit; border: 0; }
em, i { font-style: normal; }
.sprite { display: none; }
.i {
  flex: none;
  width: 28px;
  height: 28px;
  fill: none;
  stroke: currentColor;
  stroke-width: 2;
  stroke-linecap: round;
  stroke-linejoin: round;
}
.i20 { width: 20px; height: 20px; }
.i22 { width: 22px; height: 22px; }
.i24 { width: 24px; height: 24px; }
.i26 { width: 26px; height: 26px; }
.i32 { width: 32px; height: 32px; }
.i36 { width: 36px; height: 36px; }
.i40 { width: 40px; height: 40px; }
.info { margin: 0 8px; color: #e2e6ea; }
.lone { margin-left: 24px; }
.muted { color: var(--soft); }

.app { display: flex; height: 100%; }

/* Sidebar */
.sidebar {
  display: flex;
  flex-direction: column;
  flex: none;
  width: 512px;
  border-right: 2px solid var(--line);
}
.brand {
  display: flex;
  align-items: center;
  height: 144px;
  padding: 0 48px;
}
.logo { width: 64px; height: 64px; }
.brand-name { flex: 1; margin-left: 24px; padding-top: 3px; font-size: 40px; font-weight: 700; }
.side-nav { flex: 1; padding: 32px 24px 0; }
.item {
  display: flex;
  align-items: center;
  gap: 24px;
  height: 80px;
  margin-bottom: 8px;
  padding: 0 24px;
  border-radius: 12px;
  color: var(--slate);
  font-weight: 500;
}
.item span { flex: 1; }
.item > .i { color: var(--mid); }
.item.open {
  margin-bottom: 4px;
  border-left: 8px solid var(--navy);
  background: #fff;
  box-shadow: 0 2px 4px rgba(15, 23, 43, .12);
  color: var(--ink);
}
.item.open .i { color: var(--navy); }
.sub-item {
  display: flex;
  align-items: center;
  height: 88px;
  margin-bottom: 4px;
  padding: 0 56px 0 80px;
  border-radius: 12px;
  color: var(--slate);
}
.sub-item:last-child { margin-bottom: 8px; }
.sub-item.active {
  border-left: 4px solid var(--navy);
  background: #e1e3e6;
  color: var(--ink);
  font-weight: 500;
}
.count {
  display: flex;
  align-items: center;
  height: 40px;
  margin-left: auto;
  padding: 0 12px;
  border-radius: 20px;
  background: var(--navy);
  color: #fff;
  font-size: 22px;
}
.side-foot {
  height: 138px;
  padding: 28px 24px;
  border-top: 2px solid var(--line);
}
.help > .i:first-child { color: var(--slate); }
.help > .i:last-child { color: var(--soft); }

/* Top bar */
.main { flex: 1; min-width: 0; display: flex; flex-direction: column; }
.topbar {
  position: relative;
  z-index: 2;
  display: flex;
  align-items: center;
  height: 144px;
  padding: 0 64px;
  background: #fff;
  box-shadow: 0 2px 28px rgba(15, 23, 43, .08);
}
.tabs { display: flex; flex: 1; align-items: center; gap: 48px; color: var(--mid); font-weight: 500; }
.tabs .on { padding-bottom: 8px; border-bottom: 4px solid var(--navy); color: var(--ink); }
.ask {
  display: flex;
  align-items: center;
  gap: 16px;
  height: 72px;
  padding: 0 24px;
  border-radius: 12px;
  background: #f2f4f6;
  color: #314158;
  font-weight: 500;
}
.ask .i { color: var(--navy); }
.vline { width: 2px; height: 40px; margin: 0 24px; background: var(--line); }
.tools { display: flex; gap: 16px; margin: 0 4px; color: var(--soft); }
.tool { position: relative; display: flex; align-items: center; justify-content: center; width: 64px; height: 64px; }
.tool b {
  position: absolute;
  top: 0;
  right: 0;
  min-width: 36px;
  padding: 0 8px;
  border-radius: 13px;
  background: var(--navy);
  color: #fff;
  font-size: 18px;
  line-height: 26px;
  text-align: center;
}
.user {
  display: flex;
  align-items: center;
  gap: 16px;
  height: 84px;
  padding: 0 15px 0 14px;
  border: 2px solid var(--line);
  border-radius: 42px;
  background: #fff;
  box-shadow: 0 2px 5px rgba(15, 23, 43, .08);
}
.avatar {
  width: 60px;
  border-radius: 50%;
  background: #e2e8f0;
  color: var(--slate);
  font-size: 22px;
  font-weight: 600;
  line-height: 60px;
  text-align: center;
}
.user-name { color: #314158; font-size: 25px; font-weight: 600; letter-spacing: -.1px; }

/* Hints */
.banner {
  display: flex;
  justify-content: space-between;
  height: 132px;
  padding: 24px 40px 24px 32px;
  border-left: 8px solid #2b7fff;
  background: #eff6ff;
  color: #1447e6;
}
.banner h2 { margin-bottom: 4px; color: #1c398e; font-size: 28px; font-weight: 600; }
.banner .i { margin-top: 8px; color: #51a2ff; }
.inner { margin-top: 38px; }

.content { flex: 1; min-height: 0; display: flex; flex-direction: column; padding: 30px 48px 48px; }

/* Summary line */
.summary { display: flex; align-items: center; height: 76px; }
.segment {
  display: flex;
  overflow: hidden;
  height: 76px;
  border: 2px solid var(--line);
  border-radius: 12px;
  background: #fff;
  color: var(--mid);
  font-weight: 600;
}
.segment a { display: flex; align-items: center; gap: 12px; padding: 0 24px; }
.segment .on { background: var(--navy); color: #fff; }
.stats { display: flex; flex: 1; align-items: center; margin-left: 40px; }
.stats > i { width: 16px; margin: 0 16px 0 8px; color: var(--soft); text-align: center; }
.stat { display: flex; align-items: center; }
.stat b { margin-right: 12px; color: var(--navy); font-size: 32px; font-variant-numeric: tabular-nums; }
.stat span { margin-right: 12px; color: var(--mid); font-size: 24px; letter-spacing: .6px; text-transform: uppercase; }
.stat.orange b { color: #e17100; }
.stat.green b { color: #009966; }
.action {
  display: flex;
  align-items: center;
  gap: 12px;
  height: 76px;
  margin-left: 16px;
  padding: 0 24px;
  border: 2px solid #8e949e;
  border-radius: 12px;
  background: #e1e3e7;
  color: var(--navy);
  font-weight: 600;
}
.action b {
  width: 43px;
  border-radius: 16px;
  background: var(--navy);
  color: #fff;
  font-size: 20px;
  line-height: 32px;
  text-align: center;
}
.action.delays { border-color: #ffd230; background: #fffbeb; color: #bb4d00; }
.action.delays b { background: #fe9a00; color: #fffbeb; }

/* Toolbar */
.toolbar { display: flex; align-items: center; height: 64px; margin-top: 26px; }
.ink { color: var(--navy); }
.step { color: var(--mid); margin: 0 16px 0 24px; }
.btn.today + .step { margin: 0 26px 0 15px; }
.range { margin-right: 8px; font-weight: 600; }
.btn {
  display: flex;
  align-items: center;
  gap: 12px;
  height: 64px;
  padding: 0 20px;
  border: 2px solid var(--line);
  border-radius: 12px;
  background: #fff;
  color: #314158;
  font-size: 24px;
  font-weight: 600;
}
.btn small { color: var(--mid); font-size: 20px; font-weight: 500; letter-spacing: .5px; text-transform: uppercase; }
.btn .info { margin: 0 0 0 8px; }
.info + .btn { margin-left: 8px; }
.btn.gap { margin-left: 16px; }
.btn.today { height: 52px; font-weight: 500; color: var(--ink); }
.btn.push { margin-left: auto; }
.density {
  display: flex;
  align-items: center;
  height: 68px;
  margin-left: 16px;
  overflow: hidden;
  border: 2px solid var(--line);
  border-radius: 12px;
  background: #fff;
  color: var(--slate);
}
.density span { display: flex; align-items: center; justify-content: center; width: 68px; height: 64px; }
.density .on { background: var(--ink); color: #fff; }
.density .info { margin: 0 0 0 8px; }

/* Boards */
.boards { flex: 1; min-height: 0; display: flex; margin-top: 26px; }
.resizer { flex: none; width: 8px; margin: 8px 20px; border-radius: 4px; background: #e4e9ec; }
.panel {
  display: flex;
  flex-direction: column;
  flex: none;
  overflow: hidden;
  border: 2px solid var(--line);
  border-radius: 16px;
  background: #fff;
  box-shadow: 0 2px 6px rgba(15, 23, 43, .1);
}
.incoming { width: 1292px; }
.outgoing { width: 1892px; }
.panel-head {
  display: flex;
  align-items: center;
  height: 104px;
  padding: 0 24px;
  border-bottom: 2px solid var(--line);
  background: #f2f4f6;
}
.panel-head h3 { margin: 0 8px; padding-top: 2px; font-size: 28px; font-weight: 600; }
.panel-head .i26 { color: var(--navy); }
.pills { display: flex; gap: 8px; margin-left: 8px; }
.pill {
  display: flex;
  align-items: center;
  gap: 4px;
  height: 42px;
  padding: 0 12px;
  border: 2px solid;
  border-radius: 21px;
  font-size: 20px;
  font-weight: 700;
  font-variant-numeric: tabular-nums;
}
.panel-head .lone { margin-left: 24px; }
.rose { border-color: #ffccd3; background: #fff1f2; color: #e60045; }
.off { border-color: #f0f3f6; background: #f9fafc; color: #b9c1cd; }
.mint { border-color: #a4f4cf; background: #ecfdf5; color: #009966; }
.amber { border-color: #fee685; background: #fffbeb; color: #e17100; }
.tally { margin-left: auto; margin-right: 8px; font-size: 24px; font-weight: 600; }
.search {
  display: flex;
  flex: none;
  align-items: center;
  gap: 18px;
  height: 80px;
  margin: 16px 16px 0;
  padding: 0 18px;
  border: 2px solid var(--line);
  border-radius: 12px;
  color: var(--soft);
}
.search span { padding-top: 4px; }
.grid { display: grid; align-items: center; column-gap: 16px; padding-left: 12px; border-left: 6px solid transparent; }
.incoming .grid { grid-template-columns: 26px 171px 153px 348px 150px 228px 150px; }
.outgoing .grid { grid-template-columns: 26px 130px 274px 288px 288px 150px 150px 118px 400px; }
.cols {
  flex: none;
  height: 52px;
  border-bottom: 2px solid var(--line);
  border-left-color: #fff;
  color: var(--soft);
  font-size: 22px;
  font-weight: 600;
  letter-spacing: 1.1px;
  text-transform: uppercase;
}
.cols span { display: flex; align-items: center; }
.cols .num { justify-content: flex-end; }
.cols .info { margin-left: 16px; }
.rows { flex: 1; min-height: 0; overflow: hidden; }
.group {
  position: relative;
  display: flex;
  align-items: center;
  gap: 13px;
  height: 66px;
  padding: 0 4px;
  border-bottom: 2px solid var(--line);
  background: #fff;
  font-weight: 600;
}
.group .i { color: var(--soft); }
.group.first { top: 4px; z-index: 1; }
.none { height: 48px; padding-left: 4px; color: var(--soft); font-size: 24px; line-height: 48px; }
.row { height: 90px; border-bottom: 2px solid var(--line); color: var(--slate); font-size: 24px; line-height: 30px; }
.outgoing .row { height: 86px; }
.outgoing .row.last { height: 84px; border-bottom: 0; }
.outgoing .row.short { height: 76px; }
.row > b { display: flex; align-items: center; gap: 8px; color: var(--ink); font-size: 26px; font-weight: 600; }
.row > .long { letter-spacing: .25px; }
.outgoing .row > b { padding-bottom: 2px; }
.grip { color: #cbd2db; }
.tag {
  justify-self: start;
  height: 40px;
  padding: 0 16px;
  border-radius: 8px;
  font-size: 20px;
  font-weight: 600;
  letter-spacing: 1px;
  line-height: 40px;
  text-transform: uppercase;
}
.transit { background: #d0fae5; color: #007a55; }
.offload { background: #dff2fe; color: #0069a8; }
.assigned { background: #dbeafe; color: #1447e6; }
.loading { background: #fef3c6; color: #973c00; }
.virtual { background: #ede9fe; color: #7008e7; }
.pending { background: #f1f3f5; color: var(--slate); }
.c-green { border-left-color: #00bc7d; }
.c-indigo { border-left-color: #615fff; }
.c-blue { border-left-color: #51a2ff; }
.c-orange { border-left-color: #fe9a00; }
.c-violet { border-left-color: #a684ff; }
.c-yellow { border-left-color: #ffb900; }
.two { color: var(--mid); font-variant-numeric: tabular-nums; }
.two b { display: block; color: #314158; font-weight: 600; }
.two.hrs b { color: var(--slate); }
.dim { color: var(--mid); font-variant-numeric: tabular-nums; }
.num { color: var(--soft); text-align: right; font-variant-numeric: tabular-nums; }
.eta { display: flex; align-items: center; gap: 8px; color: var(--mid); font-weight: 600; font-variant-numeric: tabular-nums; }
.late { color: #e60045; }
.arrived { color: #e17100; }
.v {
  width: 32px;
  border: 2px solid #c4b4ff;
  border-radius: 8px;
  background: #f5f3ff;
  color: #7008e7;
  font-size: 20px;
  line-height: 28px;
  text-align: center;
}
.chip {
  position: relative;
  display: flex;
  align-items: center;
  gap: 8px;
  justify-self: start;
  height: 42px;
  padding: 0 12px 1px;
  border: 2px solid var(--line);
  border-radius: 8px;
  color: var(--slate);
  font-size: 22px;
  font-weight: 600;
}
.chip > .i { color: var(--navy); }
.tall { height: 52px; }
.ghost { background: #f1f4f6; color: var(--soft); font-weight: 500; }
.linked { border-color: #a5a9b1; background: #f2f3f5; color: var(--navy); }
.draft { border: 2px dashed #7d838d; color: var(--navy); }
.ops { display: flex; align-items: center; gap: 20px; margin: 0 8px 0 9px; color: var(--mid); }
.ops .i:first-child { color: var(--navy); }
.swap {
  position: absolute;
  top: -14px;
  right: -14px;
  display: flex;
  align-items: center;
  justify-content: center;
  width: 32px;
  height: 32px;
  border-radius: 50%;
  background: #00bc7d;
  box-shadow: 0 0 0 4px #fff;
  color: #fff;
}
```
